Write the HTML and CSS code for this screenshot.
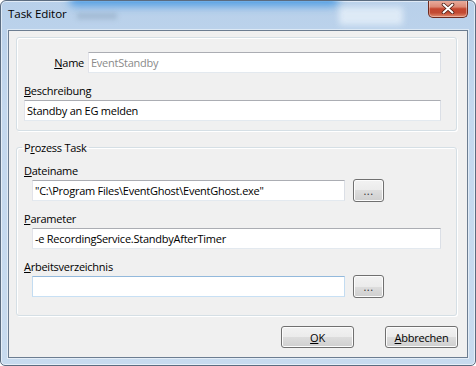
FILE: index.html
```html
<!DOCTYPE html>
<html>
<head>
<meta charset="utf-8">
<title>Task Editor</title>
<link rel="stylesheet" href="styles.css">
</head>
<body>
<div class="window">
  <div class="titlebar">
    <div class="blur glow"></div>
    <div class="blur ghost-text"></div>
    <div class="blur ghost-btn"></div>
    <span class="title">Task Editor</span>
    <div class="close">
      <svg width="14" height="11" viewBox="0 0 14 11">
        <path d="M2.5 1.5 L11.5 9.5 M11.5 1.5 L2.5 9.5" stroke="#4a1c12" stroke-width="3.6" stroke-linecap="round"/>
        <path d="M2.5 1.5 L11.5 9.5 M11.5 1.5 L2.5 9.5" stroke="#ffffff" stroke-width="2" stroke-linecap="round"/>
      </svg>
    </div>
  </div>
  <div class="client">
    <div class="group g1">
      <div class="name-row">
        <span class="lbl name-lbl"><u>N</u>ame</span>
        <div class="tb ro">EventStandby</div>
      </div>
      <div class="lbl field-lbl"><u>B</u>eschreibung</div>
      <div class="tb">Standby an EG melden</div>
    </div>
    <fieldset class="group g2">
      <legend>P<u>r</u>ozess Task</legend>
      <div class="lbl field-lbl first"><u>D</u>ateiname</div>
      <div class="row">
        <div class="tb short">"C:\Program Files\EventGhost\EventGhost.exe"</div>
        <button class="btn dots">...</button>
      </div>
      <div class="lbl field-lbl"><u>P</u>arameter</div>
      <div class="row">
        <div class="tb wide">-e RecordingService.StandbyAfterTimer</div>
      </div>
      <div class="lbl field-lbl"><u>A</u>rbeitsverzeichnis</div>
      <div class="row">
        <div class="tb short hover"></div>
        <button class="btn dots">...</button>
      </div>
    </fieldset>
    <div class="footer">
      <button class="btn act"><u>O</u>K</button>
      <button class="btn act"><u>A</u>bbrechen</button>
    </div>
  </div>
</div>
</body>
</html>
```

FILE: styles.css
```css
* { box-sizing: border-box; }
html, body { margin: 0; padding: 0; }
body {
  width: 476px;
  height: 366px;
  overflow: hidden;
  background: #ffffff;
  font-family: "Open Sans", "Noto Sans", sans-serif;
  font-size: 11px;
  letter-spacing: -0.25px;
  color: #000;
}
u { text-decoration: underline; text-underline-offset: 1px; text-decoration-thickness: 1px; }

.window {
  width: 476px;
  height: 366px;
  display: flex;
  flex-direction: column;
  border: 1px solid #5b6c80;
  border-radius: 6px 6px 5px 5px;
  background: linear-gradient(to bottom, #b8d0ea 0%, #c4d8ee 30%, #c8dbef 100%);
  box-shadow: inset 0 0 0 1px rgba(255,255,255,0.55);
  overflow: hidden;
}

.titlebar {
  position: relative;
  height: 29px;
  display: flex;
  align-items: flex-start;
  flex: none;
}
.blur { position: absolute; pointer-events: none; }
.glow {
  left: 68px; top: -8px; width: 270px; height: 13px;
  background: #3f95e2;
  filter: blur(4px);
  opacity: 0.85;
  border-radius: 6px;
}
.ghost-text {
  left: 76px; top: 12px; width: 40px; height: 6px;
  background: #8ea6bf;
  filter: blur(2.5px);
  opacity: 0.55;
}
.ghost-btn {
  left: 338px; top: 6px; width: 64px; height: 18px;
  background: #e2edf8;
  filter: blur(3px);
  opacity: 0.9;
  border-radius: 3px;
}
.title {
  position: relative;
  margin: 5px 0 0 7px;
  line-height: 16px;
  font-size: 11.6px;
  letter-spacing: -0.1px;
  color: #000;
}
.close {
  position: relative;
  margin: -1px 7px 0 auto;
  width: 40px;
  height: 18px;
  border: 1px solid #6e2a1e;
  border-top: none;
  border-radius: 0 0 5px 5px;
  background: linear-gradient(to bottom, #eab0a2 0%, #dc8a76 40%, #c4462f 52%, #c24a32 75%, #e38d70 100%);
  box-shadow: inset 0 0 0 1px rgba(255,255,255,0.35);
  display: flex;
  align-items: center;
  justify-content: center;
}

.client {
  margin: 0 7px;
  height: 328px;
  flex: none;
  border: 1px solid #6c7d91;
  background: #f0f0f0;
  box-shadow: 0 0 0 1px rgba(255,255,255,0.5);
  display: flex;
  flex-direction: column;
  align-items: flex-start;
}

.group {
  width: 441px;
  margin: 0 0 0 7px;
  border: 1px solid #d5dfe5;
  border-radius: 3px;
  box-shadow: inset 1px 1px 0 #ffffff, 1px 1px 0 #ffffff;
  padding: 14px 15px 9px 7px;
  min-width: 0;
}
.g1 { margin-top: 6px; }
.g2 {
  margin-top: 9px;
  padding: 8px 15px 18px 7px;
}
legend {
  line-height: 15px;
  padding: 0 2px;
  margin-left: -2px;
}

.lbl { line-height: 15px; white-space: nowrap; }
.field-lbl { margin-top: 10px; margin-bottom: 2px; }
.field-lbl.first { margin-top: 0; }

.name-row { display: flex; align-items: center; height: 21px; }
.name-lbl { width: 60px; text-align: right; margin-right: 4px; flex: none; }
.name-row .tb { flex: 1; }

.tb {
  height: 21px;
  border: 1px solid;
  border-color: #abadb3 #dbdfe6 #e3e9ef #e2e3ea;
  background: #ffffff;
  padding: 0 2px;
  line-height: 19px;
  white-space: nowrap;
  overflow: hidden;
}
.tb.ro { color: #8a8a8a; }
.tb.hover { border-color: #93b9dc #c3dcf1 #c8e0f4 #c3dcf1; }

.row { display: flex; align-items: center; height: 21px; margin-left: 8px; }
.tb.short { width: 313px; flex: none; }
.tb.wide { flex: 1; }

.btn {
  font: inherit;
  letter-spacing: inherit;
  color: #000;
  height: 22px;
  padding: 0;
  border: 1px solid #707070;
  border-radius: 3px;
  background: linear-gradient(to bottom, #f2f2f2 0%, #ebebeb 50%, #dddddd 50%, #cfcfcf 100%);
  box-shadow: inset 0 0 0 1px #fcfcfc;
}
.dots {
  width: 31px;
  height: 23px;
  margin: -1px 0 -1px 8px;
  flex: none;
  line-height: 18px;
  color: #333;
  letter-spacing: 0.5px;
}

.footer {
  align-self: stretch;
  display: flex;
  justify-content: flex-end;
  gap: 31px;
  margin-top: 10px;
  padding-right: 9px;
}
.act { width: 73px; }
```
